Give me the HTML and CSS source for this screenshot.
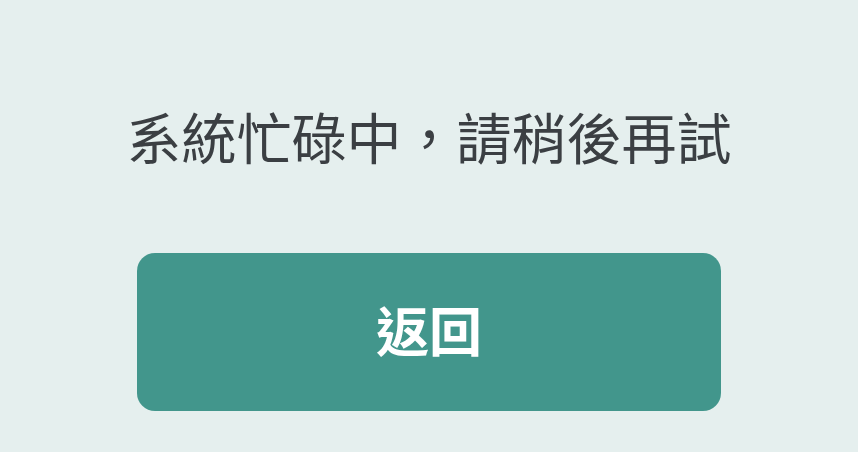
FILE: index.html
```html
<!DOCTYPE html>
<html lang="zh-Hant">
<head>
<meta charset="utf-8">
<link rel="stylesheet" href="styles.css">
</head>
<body>
<main class="page">
  <p class="message">系統忙碌中，請稍後再試</p>
  <button class="back-btn" type="button">返回</button>
</main>
</body>
</html>
```
FILE: styles.css
```css
html, body {
  margin: 0;
  padding: 0;
  background: #e5efee;
}
.page {
  width: 858px;
  height: 452px;
  display: flex;
  flex-direction: column;
  align-items: center;
  box-sizing: border-box;
  padding-top: 101px;
  font-family: "Noto Sans CJK TC", "Noto Sans CJK SC", sans-serif;
}
.message {
  margin: 0;
  font-size: 55px;
  line-height: 68px;
  color: #3b3f43;
  font-weight: 400;
}
.back-btn {
  margin-top: 84px;
  width: 584px;
  height: 158px;
  border: none;
  border-radius: 18px;
  background: #42968c;
  color: #ffffff;
  font-family: "Noto Sans CJK TC", "Noto Sans CJK SC", sans-serif;
  font-size: 53px;
  font-weight: 700;
  padding: 0 0 6px 0;
}
```
